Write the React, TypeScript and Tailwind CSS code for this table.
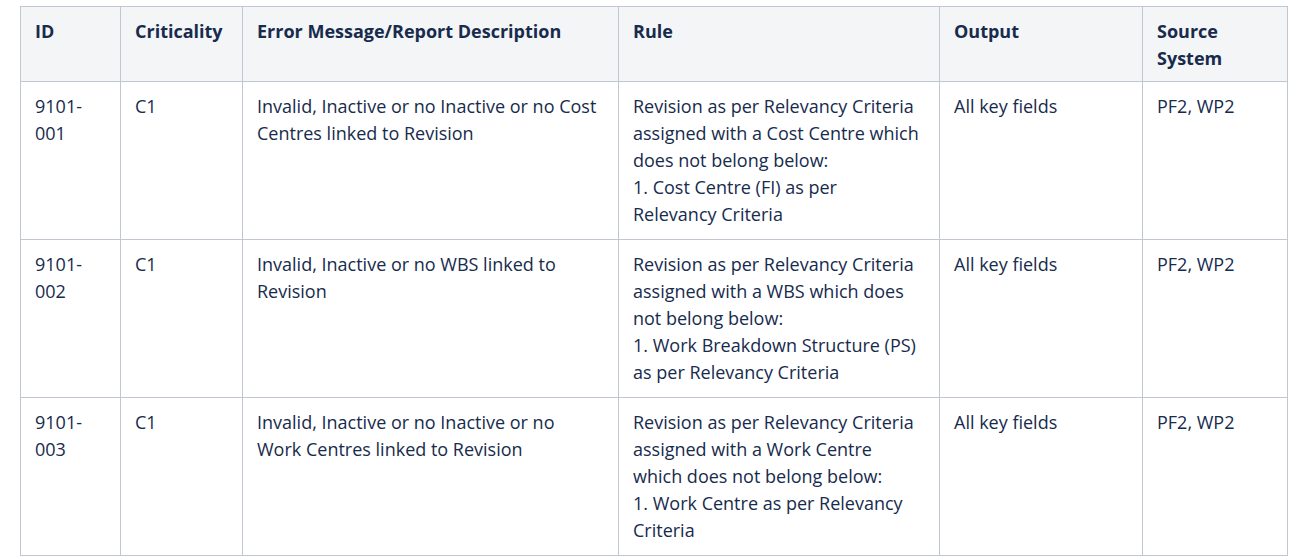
const rows = [
  {
    id: '9101-001',
    crit: 'C1',
    msg: 'Invalid, Inactive or no Inactive or no Cost Centres linked to Revision',
    rule: [
      'Revision as per Relevancy Criteria assigned with a Cost Centre which does not belong below:',
      '1. Cost Centre (FI) as per Relevancy Criteria',
    ],
    output: 'All key fields',
    source: 'PF2, WP2',
  },
  {
    id: '9101-002',
    crit: 'C1',
    msg: 'Invalid, Inactive or no WBS linked to Revision',
    rule: [
      'Revision as per Relevancy Criteria assigned with a WBS which does not belong below:',
      '1. Work Breakdown Structure (PS) as per Relevancy Criteria',
    ],
    output: 'All key fields',
    source: 'PF2, WP2',
  },
  {
    id: '9101-003',
    crit: 'C1',
    msg: 'Invalid, Inactive or no Inactive or no Work Centres linked to Revision',
    rule: [
      'Revision as per Relevancy Criteria assigned with a Work Centre which does not belong below:',
      '1. Work Centre as per Relevancy Criteria',
    ],
    output: 'All key fields',
    source: 'PF2, WP2',
  },
];

const headers = ['ID', 'Criticality', 'Error Message/Report Description', 'Rule', 'Output', 'Source System'];

export default function App() {
  return (
    <div className="w-[1296px] h-[557px] overflow-hidden bg-white pt-[6px] pl-[20px] font-['Open_Sans',sans-serif] text-[18px] leading-[27px] text-[#172b4d]">
      <table className="table-fixed border-collapse w-[1267px]">
        <colgroup>
          <col className="w-[100px]" />
          <col className="w-[122px]" />
          <col className="w-[376px]" />
          <col className="w-[321px]" />
          <col className="w-[203px]" />
          <col className="w-[145px]" />
        </colgroup>
        <thead>
          <tr className="bg-[#f4f5f7]">
            {headers.map((h) => (
              <th key={h} className="border border-[#c1c7d0] pl-[14px] pr-[17px] pt-[11px] pb-[9px] text-left align-top font-bold">
                {h}
              </th>
            ))}
          </tr>
        </thead>
        <tbody>
          {rows.map((r) => (
            <tr key={r.id}>
              <td className="border border-[#c1c7d0] pl-[14px] pr-[17px] py-[11px] align-top">{r.id}</td>
              <td className="border border-[#c1c7d0] pl-[14px] pr-[17px] py-[11px] align-top">{r.crit}</td>
              <td className="border border-[#c1c7d0] pl-[14px] pr-[17px] py-[11px] align-top">{r.msg}</td>
              <td className="border border-[#c1c7d0] pl-[14px] pr-[17px] py-[11px] align-top">
                {r.rule.map((line) => (
                  <div key={line}>{line}</div>
                ))}
              </td>
              <td className="border border-[#c1c7d0] pl-[14px] pr-[17px] py-[11px] align-top">{r.output}</td>
              <td className="border border-[#c1c7d0] pl-[14px] pr-[17px] py-[11px] align-top">{r.source}</td>
            </tr>
          ))}
        </tbody>
      </table>
    </div>
  );
}
